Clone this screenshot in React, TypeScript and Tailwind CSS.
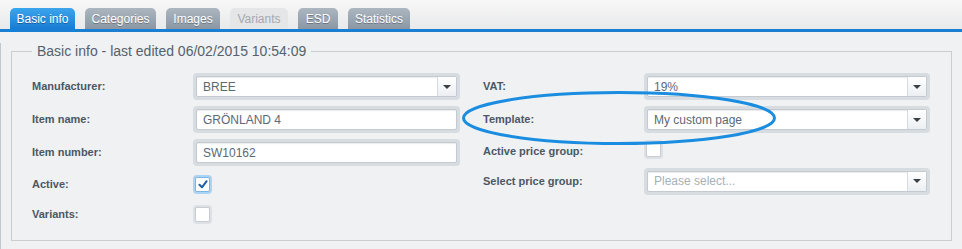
import React from 'react';

type Tab = { label: string; width: string; state: 'active' | 'normal' | 'disabled' };

const tabs: Tab[] = [
  { label: 'Basic info', width: 'w-[65px]', state: 'active' },
  { label: 'Categories', width: 'w-[71px]', state: 'normal' },
  { label: 'Images', width: 'w-[54px]', state: 'normal' },
  { label: 'Variants', width: 'w-[58px]', state: 'disabled' },
  { label: 'ESD', width: 'w-[40px]', state: 'normal' },
  { label: 'Statistics', width: 'w-[62px]', state: 'normal' },
];

const tabClass = {
  active: 'bg-gradient-to-b from-[#3ca5ec] to-[#167cd3] text-white [text-shadow:0_1px_0_rgba(0,40,90,0.45)]',
  normal: 'bg-gradient-to-b from-[#abb6c0] to-[#8b98a4] text-white [text-shadow:0_1px_0_rgba(40,50,60,0.4)]',
  disabled: 'bg-[#e4e6e8] text-[#a3a9af]',
};

// Soft grey ring around every field, white inner box
const Field = ({ value, select, placeholder }: { value: string; select?: boolean; placeholder?: boolean }) => (
  <div className="h-[27px] w-full rounded-[4px] bg-[#d7dce1] p-[3px]">
    <div className="flex h-full items-stretch rounded-[2px] border border-[#c3cad1] bg-white shadow-[inset_0_1px_1px_rgba(0,0,0,0.08)]">
      <span className={`flex flex-1 items-center pl-[6px] text-[12px] ${placeholder ? 'text-[#a8b0b8]' : 'text-[#5b6876]'}`}>
        {value}
      </span>
      {select && (
        <span className="flex w-[19px] items-center justify-center border-l border-[#d6dbe0] bg-gradient-to-b from-white to-[#eceff2]">
          <span className="h-0 w-0 border-x-[4px] border-t-[4px] border-x-transparent border-t-[#3a3f44]" />
        </span>
      )}
    </div>
  </div>
);

const Check = ({ checked }: { checked?: boolean }) => (
  <div className={`h-[19px] w-[19px] rounded-[4px] p-[2px] ${checked ? 'bg-[#a9d4f6]' : 'bg-[#dde1e5]'}`}>
    <div
      className={`flex h-full w-full items-center justify-center rounded-[2px] border bg-white ${
        checked ? 'border-[#7db6e6]' : 'border-[#c7cdd3]'
      }`}
    >
      {checked && (
        <svg width="10" height="9" viewBox="0 0 10 9">
          <path d="M1.5 4.8 L4 7.3 L8.6 1.2" fill="none" stroke="#1d5fa8" strokeWidth="2" strokeLinecap="round" strokeLinejoin="round" />
        </svg>
      )}
    </div>
  </div>
);

const Label = ({ children }: { children: React.ReactNode }) => (
  <span className="w-[161px] shrink-0 text-[11px] font-bold text-[#4b5865]">{children}</span>
);

const Row = ({ h, label, children, width }: { h: string; label: string; children: React.ReactNode; width: string }) => (
  <div className={`flex items-center ${h}`}>
    <Label>{label}</Label>
    <div className={`${width} flex`}>{children}</div>
  </div>
);

export default function App() {
  return (
    <div className="relative h-[249px] w-[962px] overflow-hidden bg-[#eff1f3] font-['Liberation_Sans',Arial,sans-serif]">
      {/* Tab bar */}
      <div className="flex h-[29px] items-end gap-[10px] bg-gradient-to-b from-[#f8f8f8] to-[#e8e9ea] pl-[10px]">
        {tabs.map((t) => (
          <div
            key={t.label}
            className={`flex h-[21px] items-center justify-center rounded-t-[5px] text-[12px] ${t.width} ${tabClass[t.state]}`}
          >
            {t.label}
          </div>
        ))}
      </div>
      <div className="h-[3px] bg-[#1a7fd3]" />

      {/* Panel */}
      <div className="border-l border-[#bfc7cf] pb-[12px]">
        <fieldset className="mx-[10px] mt-[11px] border border-[#c9ced3] pb-[11px] pt-[11px] pl-[20px]">
          <legend className="px-[5px] text-[14px] leading-[16px] text-[#56616c]">
            Basic info - last edited 06/02/2015 10:54:09
          </legend>
          <div className="flex">
            <div className="flex flex-col">
              <Row h="h-[33px]" label="Manufacturer:" width="w-[267px]">
                <Field value="BREE" select />
              </Row>
              <Row h="h-[33px]" label="Item name:" width="w-[267px]">
                <Field value="GRÖNLAND 4" />
              </Row>
              <Row h="h-[33px]" label="Item number:" width="w-[267px]">
                <Field value="SW10162" />
              </Row>
              <Row h="h-[30px]" label="Active:" width="w-[267px]">
                <Check checked />
              </Row>
              <Row h="h-[30px]" label="Variants:" width="w-[267px]">
                <Check />
              </Row>
            </div>
            <div className="ml-[23px] flex flex-col">
              <Row h="h-[33px]" label="VAT:" width="w-[286px]">
                <Field value="19%" select />
              </Row>
              <Row h="h-[33px]" label="Template:" width="w-[286px]">
                <Field value="My custom page" select />
              </Row>
              <Row h="h-[31px]" label="Active price group:" width="w-[286px]">
                <div className="-mt-[5px]">
                  <Check />
                </div>
              </Row>
              <Row h="h-[28px]" label="Select price group:" width="w-[286px]">
                <Field value="Please select..." select placeholder />
              </Row>
            </div>
          </div>
        </fieldset>
      </div>

      {/* Hand-drawn highlight around the Template row */}
      <svg className="pointer-events-none absolute left-[460px] top-[90px]" width="318" height="56" viewBox="0 0 318 56">
        <ellipse cx="159" cy="28" rx="155.5" ry="25.5" fill="none" stroke="#1a8de0" strokeWidth="3" />
      </svg>
    </div>
  );
}
